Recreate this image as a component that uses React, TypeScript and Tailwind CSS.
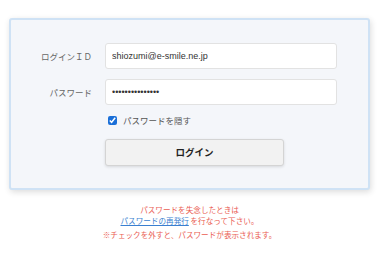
import { useState } from 'react'

// LoginCard: login id / password form with a "hide password" toggle and
// the reissue notice underneath.
export default function App() {
  const [loginId, setLoginId] = useState('shiozumi@e-smile.ne.jp')
  const [password, setPassword] = useState('aaaaaaaaaaaaaaa')
  const [hide, setHide] = useState(true)
  return (
    <div className="w-[380px] h-[254px] bg-white pt-[18px] px-[9px] font-['Liberation_Sans','Noto_Sans_CJK_JP',sans-serif]">
      <div className="w-[361px] rounded-[3px] border-2 border-[#cfe2f5] bg-[#f4f6fa] pt-[23px] pb-[22px] shadow-[1px_2px_6px_rgba(0,0,0,0.14)]">
        <div className="grid grid-cols-[81px_232px] gap-x-[13px]">
          <label className="flex h-[26px] items-center justify-end text-[8.5px] text-[#666] font-['Noto_Sans_CJK_JP',sans-serif]">
            ログインＩＤ
          </label>
          <input value={loginId} onChange={(e) => setLoginId(e.target.value)}
            className="h-[26px] w-[232px] rounded-[3px] border border-[#e2e2e2] bg-white pl-[6px] text-[9px] text-[#333] outline-none" />

          <label className="mt-[10px] flex h-[26px] items-center justify-end text-[8.5px] text-[#666] font-['Noto_Sans_CJK_JP',sans-serif]">
            パスワード
          </label>
          <input type={hide ? 'password' : 'text'} value={password} onChange={(e) => setPassword(e.target.value)}
            className="mt-[10px] h-[26px] w-[232px] rounded-[3px] border border-[#e2e2e2] bg-white pl-[6px] text-[9px] text-[#333] outline-none" />

          <div />
          <label className="mt-[7px] flex h-[16px] items-center gap-[6px] pl-[3px] text-[8.5px] text-[#555] font-['Noto_Sans_CJK_JP',sans-serif]">
            <input type="checkbox" checked={hide} onChange={(e) => setHide(e.target.checked)}
              className="m-0 h-[9px] w-[9px] accent-[#1a6fd8]" />
            パスワードを隠す
          </label>

          <div />
          <button type="button"
            className="mt-[11px] h-[27px] w-[179px] rounded-[3px] border border-[#d4d4d4] bg-[#f2f2f2] text-[9.5px] font-bold text-[#222] shadow-[0_1px_3px_rgba(0,0,0,0.12)] font-['Noto_Sans_CJK_JP',sans-serif]">
            ログイン
          </button>
        </div>
      </div>

      <div className="w-[361px] pt-[14px] text-center text-[7.6px] leading-[11px] text-[#ea5d52] font-['Noto_Sans_CJK_JP',sans-serif]">
        <p>パスワードを失念したときは</p>
        <p>
          <a href="#" className="text-[#3a7fd0] underline">パスワードの再発行</a> を行なって下さい。
        </p>
        <p className="mt-[3px]">※チェックを外すと、パスワードが表示されます。</p>
      </div>
    </div>
  )
}
